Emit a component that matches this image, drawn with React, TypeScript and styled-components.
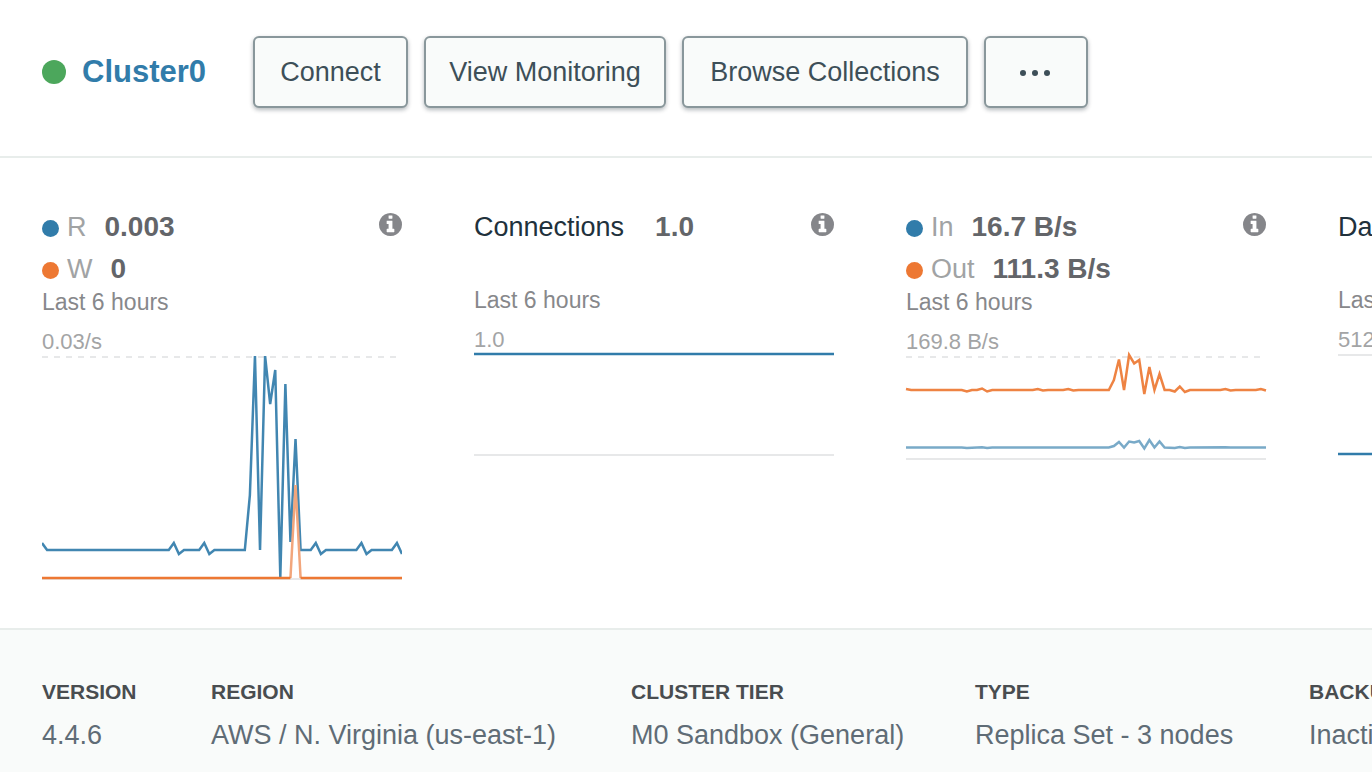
import React from "react";
import styled, { createGlobalStyle } from "styled-components";

const colors = {
  blue: "#317caa",
  orange: "#ed7833",
  green: "#4ca75c",
  rule: "#e8edeb",
  axis: "#e7e8e9",
  surface: "#f9fbfa",
};

const GlobalStyle = createGlobalStyle`
  *, *::before, *::after { box-sizing: border-box; }
  body {
    margin: 0;
    background: #fff;
    font-family: "Liberation Sans", Arial, sans-serif;
    overflow-x: hidden;
  }
`;

const Page = styled.main`
  display: flex;
  flex-direction: column;
  min-height: 100vh;
  overflow: hidden;
  white-space: nowrap;
`;

const Header = styled.header`
  display: flex;
  align-items: center;
  gap: 16px;
  padding: 36px 42px 48px;
  border-bottom: 2px solid ${colors.rule};
`;

const StatusDot = styled.span`
  flex: none;
  width: 24px;
  height: 24px;
  border-radius: 50%;
  background: ${colors.green};
`;

const ClusterLink = styled.a`
  min-width: 155px;
  color: ${colors.blue};
  font-size: 31px;
  line-height: 36px;
  font-weight: 700;
  text-decoration: none;
`;

const Button = styled.button<{ $minWidth: number }>`
  display: flex;
  flex: none;
  align-items: center;
  justify-content: center;
  min-width: ${(p) => p.$minWidth}px;
  height: 72px;
  padding: 0 20px;
  border: 2px solid #89979b;
  border-radius: 6px;
  background: ${colors.surface};
  box-shadow: 0 2px 4px rgba(6, 22, 33, 0.3);
  color: #3d4f58;
  font-family: inherit;
  font-size: 27px;
  line-height: 32px;
  white-space: nowrap;
  cursor: pointer;
`;

const Metrics = styled.section`
  display: flex;
  gap: 72px;
  padding: 48px 42px;
`;

const Card = styled.article`
  flex: none;
  width: 360px;
`;

const CardHead = styled.div<{ $compact?: boolean }>`
  display: flex;
  justify-content: space-between;
  align-items: flex-start;
  height: ${(p) => (p.$compact ? 82 : 84)}px;
`;

const Reading = styled.div<{ $gap: number }>`
  display: flex;
  align-items: center;
  gap: ${(p) => p.$gap}px;
  font-size: 27px;
  line-height: 42px;
`;

const SeriesLabel = styled.span`
  display: flex;
  align-items: center;
  gap: 8px;
  color: #a1a3a4;
`;

const SeriesDot = styled.span<{ $color: string }>`
  width: 17px;
  height: 17px;
  margin-top: 3px;
  border-radius: 50%;
  background: ${(p) => p.$color};
`;

const CardTitle = styled.h2`
  margin: 0;
  color: #21313c;
  font: inherit;
`;

const Value = styled.strong`
  color: #636569;
  font-size: 28px;
`;

const InfoButton = styled.button`
  display: flex;
  margin: 7px 0 0;
  padding: 0;
  border: 0;
  background: none;
  color: #85868a;
  cursor: pointer;
`;

const Period = styled.p`
  margin: 0 0 14px;
  color: #87888b;
  font-size: 23px;
  line-height: 24px;
`;

const ScaleLabel = styled.p`
  margin: 0;
  color: #a3a4a5;
  font-size: 22px;
  line-height: 28px;
`;

const Plot = styled.svg<{ $clip?: boolean }>`
  display: block;
  overflow: ${(p) => (p.$clip ? "hidden" : "visible")};
  fill: none;
  stroke-width: 2.5px;
`;

const Details = styled.dl`
  display: grid;
  grid-template-columns: 97px 348px 272px 262px auto;
  column-gap: 72px;
  flex: 1;
  align-content: start;
  margin: 0;
  padding: 50px 42px 16px;
  border-top: 2px solid ${colors.rule};
  background: ${colors.surface};
`;

const Detail = styled.div``;

const Term = styled.dt`
  margin-bottom: 10px;
  color: #494d50;
  font-size: 21px;
  line-height: 24px;
  font-weight: 700;
  text-transform: uppercase;
`;

const Description = styled.dd`
  margin: 0;
  color: #5f6c76;
  font-size: 27px;
  line-height: 42px;
`;

type Sample = [index: number, y: number];

const WIDTH = 360;
const LAST_SAMPLE = 71;

const toPoints = (samples: Sample[]) =>
  samples.map(([i, y]) => `${((i * WIDTH) / LAST_SAMPLE).toFixed(2)},${y}`).join(" ");

const reads: Sample[] = [
  [0, 187], [1, 194], [25, 194], [26, 187], [27, 198], [28, 194], [31, 194],
  [32, 187], [33, 198], [34, 194], [40, 194], [41, 139], [42, 0], [43, 194],
  [44, 0], [45, 48], [46, 14], [47, 221], [48, 28], [49, 186], [50, 83],
  [51, 194], [53, 194], [54, 187], [55, 198], [56, 194], [62, 194], [63, 187],
  [64, 198], [65, 194], [69, 194], [70, 187], [71, 198],
];

const writePeak: Sample[] = [[49, 222], [50, 129], [51, 222]];

const bytesOut: Sample[] = [
  [0, 33], [1, 34], [11, 34], [12, 35.5], [13, 34], [14, 34], [15, 32.5],
  [16, 35.5], [17, 34], [25, 34], [26, 33], [27, 34.5], [28, 34], [31, 34],
  [32, 33], [33, 34.5], [34, 34], [40, 34], [41, 24], [42, 3.5], [43, 34],
  [44, -1], [45, 7.5], [46, 4], [47, 38], [48, 11], [49, 34], [50, 18],
  [51, 34], [52, 34], [53, 35.5], [54, 30.5], [55, 36], [56, 34], [62, 34],
  [63, 33], [64, 34.5], [65, 34], [69, 34], [70, 33], [71, 34.5],
];

const bytesIn: Sample[] = [
  [0, 91.5], [11, 91.5], [12, 92], [15, 91.2], [16, 92], [17, 91.5], [40, 91.5],
  [41, 90], [42, 86], [43, 91.5], [44, 85.5], [45, 86.5], [46, 85], [47, 92.5],
  [48, 84], [49, 91.5], [50, 85.5], [51, 91.5], [53, 92], [54, 91], [55, 92],
  [56, 91.5], [63, 91.2], [64, 91.6], [71, 91.6],
];

function InfoIcon() {
  return (
    <svg width="23" height="23" viewBox="128 128 1536 1536" fill="currentColor" aria-hidden="true">
      <path d="M1152 1376v-160q0-14-9-23t-23-9h-96v-512q0-14-9-23t-23-9h-320q-14 0-23 9t-9 23v160q0 14 9 23t23 9h96v320h-96q-14 0-23 9t-9 23v160q0 14 9 23t23 9h448q14 0 23-9t9-23zm-128-896v-160q0-14-9-23t-23-9h-192q-14 0-23 9t-9 23v160q0 14 9 23t23 9h192q14 0 23-9t9-23zm640 416q0 209-103 385.5t-279.5 279.5-385.5 103-385.5-103-279.5-279.5-103-385.5 103-385.5 279.5-279.5 385.5-103 385.5 103 279.5 279.5 103 385.5z" />
    </svg>
  );
}

function EllipsisIcon() {
  return (
    <svg width="32" height="8" viewBox="0 0 32 8" fill="currentColor" aria-hidden="true">
      <circle cx="3" cy="5" r="3" />
      <circle cx="15" cy="5" r="3" />
      <circle cx="27" cy="5" r="3" />
    </svg>
  );
}

function Axis({ y, dashed }: { y: number; dashed?: boolean }) {
  return (
    <line
      x1="0"
      x2={WIDTH}
      y1={y}
      y2={y}
      stroke={colors.axis}
      strokeWidth="2"
      strokeDasharray={dashed ? "6 6" : undefined}
    />
  );
}

function Info({ topic }: { topic: string }) {
  return (
    <InfoButton type="button" aria-label={`About ${topic}`}>
      <InfoIcon />
    </InfoButton>
  );
}

function Series({ color, label, value }: { color: string; label: string; value: string }) {
  return (
    <Reading $gap={18}>
      <SeriesLabel>
        <SeriesDot $color={color} />
        {label}
      </SeriesLabel>
      <Value>{value}</Value>
    </Reading>
  );
}

function SingleReading({ title, value }: { title: string; value: string }) {
  return (
    <Reading $gap={31}>
      <CardTitle>{title}</CardTitle>
      <Value>{value}</Value>
    </Reading>
  );
}

const details = [
  ["Version", "4.4.6"],
  ["Region", "AWS / N. Virginia (us-east-1)"],
  ["Cluster Tier", "M0 Sandbox (General)"],
  ["Type", "Replica Set - 3 nodes"],
  ["Backups", "Inactive"],
];

export default function App() {
  return (
    <>
      <GlobalStyle />
      <Page>
        <Header>
          <StatusDot />
          <ClusterLink href="#cluster0">Cluster0</ClusterLink>
          <Button type="button" $minWidth={155}>Connect</Button>
          <Button type="button" $minWidth={242}>View Monitoring</Button>
          <Button type="button" $minWidth={286}>Browse Collections</Button>
          <Button type="button" $minWidth={104} aria-label="More actions">
            <EllipsisIcon />
          </Button>
        </Header>

        <Metrics>
          <Card>
            <CardHead>
              <div>
                <Series color={colors.blue} label="R" value="0.003" />
                <Series color={colors.orange} label="W" value="0" />
              </div>
              <Info topic="operations" />
            </CardHead>
            <Period>Last 6 hours</Period>
            <ScaleLabel>0.03/s</ScaleLabel>
            <Plot width={WIDTH} height="224" $clip>
              <Axis y={1} dashed />
              <Axis y={223} />
              <polyline points={toPoints(reads)} stroke={colors.blue} strokeOpacity="0.92" />
              <polyline points={toPoints(writePeak)} stroke="#f2a67c" />
              <polyline points={toPoints([[0, 222], [49, 222]])} stroke={colors.orange} />
              <polyline points={toPoints([[51, 222], [71, 222]])} stroke={colors.orange} />
            </Plot>
          </Card>

          <Card>
            <CardHead $compact>
              <SingleReading title="Connections" value="1.0" />
              <Info topic="connections" />
            </CardHead>
            <Period>Last 6 hours</Period>
            <ScaleLabel>1.0</ScaleLabel>
            <Plot width={WIDTH} height="102">
              <Axis y={101} />
              <polyline points={toPoints([[0, 0], [71, 0]])} stroke={colors.blue} />
            </Plot>
          </Card>

          <Card>
            <CardHead>
              <div>
                <Series color={colors.blue} label="In" value="16.7 B/s" />
                <Series color={colors.orange} label="Out" value="111.3 B/s" />
              </div>
              <Info topic="network traffic" />
            </CardHead>
            <Period>Last 6 hours</Period>
            <ScaleLabel>169.8 B/s</ScaleLabel>
            <Plot width={WIDTH} height="104">
              <Axis y={1} dashed />
              <Axis y={103} />
              <polyline points={toPoints(bytesIn)} stroke={colors.blue} strokeOpacity="0.65" />
              <polyline points={toPoints(bytesOut)} stroke={colors.orange} strokeOpacity="0.92" />
            </Plot>
          </Card>

          <Card>
            <CardHead $compact>
              <SingleReading title="Data Size" value="0.0 B" />
              <Info topic="data size" />
            </CardHead>
            <Period>Last 6 hours</Period>
            <ScaleLabel>512.0 MB</ScaleLabel>
            <Plot width={WIDTH} height="102">
              <Axis y={1} />
              <polyline points={toPoints([[0, 100], [71, 100]])} stroke={colors.blue} />
            </Plot>
          </Card>
        </Metrics>

        <Details>
          {details.map(([term, description]) => (
            <Detail key={term}>
              <Term>{term}</Term>
              <Description>{description}</Description>
            </Detail>
          ))}
        </Details>
      </Page>
    </>
  );
}
